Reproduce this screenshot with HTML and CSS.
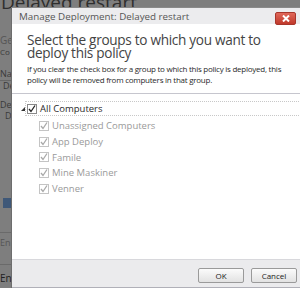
FILE: index.html
```html
<!DOCTYPE html>
<html lang="en">
<head>
  <meta charset="UTF-8">
  <title>Manage Deployment</title>
  <link rel="stylesheet" href="styles.css">
</head>
<body>
  <div class="backdrop">
    <div class="page-title">Delayed restart</div>
    <div class="frag ge">Ge</div>
    <div class="frag co">Co</div>
    <div class="frag na">Na</div>
    <div class="frag de1">De</div>
    <div class="frag des">Des</div>
    <div class="frag de2">De</div>
    <div class="frag blue"></div>
    <div class="frag en1">En</div>
    <div class="frag en2">En</div>
  </div>

  <div class="dialog">
    <div class="titlebar">
      <span class="title">Manage Deployment: Delayed restart</span>
      <span class="close">
        <svg width="8" height="7" viewBox="0 0 8 7"><path d="M1 0.5 L7 6.5 M7 0.5 L1 6.5" stroke="#fff" stroke-width="2"/></svg>
      </span>
    </div>
    <div class="intro">
      <h2>Select the groups to which you want to deploy this policy</h2>
      <p>If you clear the check box for a group to which this policy is deployed, this policy will be removed from computers in that group.</p>
    </div>
    <div class="tree">
      <div class="node root">
        <span class="arrow"></span>
        <span class="box"><svg width="8" height="8" viewBox="0 0 8 8"><path d="M1 4 L3 6.5 L7 0.5" fill="none" stroke="#222" stroke-width="1.3"/></svg></span>
        <span>All Computers</span>
      </div>
      <div class="children">
        <div class="node"><span class="box"><svg width="8" height="8" viewBox="0 0 8 8"><path d="M1 4 L3 6.5 L7 0.5" fill="none" stroke="#a8a8a8" stroke-width="1.3"/></svg></span>Unassigned Computers</div>
        <div class="node"><span class="box"><svg width="8" height="8" viewBox="0 0 8 8"><path d="M1 4 L3 6.5 L7 0.5" fill="none" stroke="#a8a8a8" stroke-width="1.3"/></svg></span>App Deploy</div>
        <div class="node"><span class="box"><svg width="8" height="8" viewBox="0 0 8 8"><path d="M1 4 L3 6.5 L7 0.5" fill="none" stroke="#a8a8a8" stroke-width="1.3"/></svg></span>Famile</div>
        <div class="node"><span class="box"><svg width="8" height="8" viewBox="0 0 8 8"><path d="M1 4 L3 6.5 L7 0.5" fill="none" stroke="#a8a8a8" stroke-width="1.3"/></svg></span>Mine Maskiner</div>
        <div class="node"><span class="box"><svg width="8" height="8" viewBox="0 0 8 8"><path d="M1 4 L3 6.5 L7 0.5" fill="none" stroke="#a8a8a8" stroke-width="1.3"/></svg></span>Venner</div>
      </div>
    </div>
    <div class="footer">
      <button>OK</button>
      <button>Cancel</button>
    </div>
  </div>
</body>
</html>
```

FILE: styles.css
```css
body {
  margin: 0;
  width: 300px;
  height: 288px;
  overflow: hidden;
  position: relative;
  background-color: #7e7e7e;
  font-family: 'Open Sans', 'Noto Sans', sans-serif;
}
.backdrop {
  color: #3a3a3a;
  font-size: 9px;
}
.page-title {
  font-size: 19px;
  line-height: 14px;
  margin-top: -5px;
  padding-left: 1px;
  color: #2e2e2e;
}
.frag {
  height: 10px;
  line-height: 10px;
}
.ge { margin-top: 26px; font-size: 10px; color: #555; }
.co { margin-top: 2px; font-size: 8px; }
.na { margin-top: 12px; }
.de1 { margin-top: 1px; padding-left: 3px; border-top: 1px solid #666; }
.des { margin-top: 9px; }
.de2 { margin-top: 1px; padding-left: 5px; }
.blue { margin: 77px 0 0 3px; width: 8px; height: 10px; background: #3f5878; }
.en1 { margin-top: 24px; border-top: 1px solid #6a6a6a; padding-top: 5px; color: #555; }
.en2 { margin-top: 16px; border-top: 1px solid #6a6a6a; padding-top: 8px; font-size: 10px; color: #222; }

.dialog {
  position: absolute;
  left: 11px;
  top: 7px;
  width: 300px;
  height: 281px;
  background-color: #fff;
  display: flex;
  flex-direction: column;
  border-left: 1px solid #6d6d6d;
  border-top: 1px solid #8a8a8a;
  box-sizing: border-box;
}
.titlebar {
  height: 16px;
  background-color: #ececee;
  display: flex;
  align-items: center;
  justify-content: space-between;
  padding-left: 7px;
  padding-right: 15px;
}
.title {
  font-size: 9.8px;
  color: #555;
}
.close {
  width: 19px;
  height: 11px;
  margin-top: 4px;
  background: linear-gradient(#e0685a, #c0392b);
  border: 1px solid #a8362c;
  border-radius: 2px;
  display: flex;
  align-items: center;
  justify-content: center;
}
.intro {
  padding: 9px 10px 0 15px;
  border-bottom: 1px solid #c6c6ce;
  height: 60px;
}
h2 {
  margin: 0;
  width: 250px;
  font-size: 13.6px;
  font-weight: normal;
  line-height: 13px;
  letter-spacing: -0.3px;
  color: #444;
}
p {
  margin: 4px 0 0;
  font-size: 8px;
  line-height: 11px;
  color: #2a2a2a;
  letter-spacing: -0.25px;
}
.tree {
  padding-top: 7px;
  font-size: 9.5px;
}
.node {
  display: flex;
  align-items: center;
  height: 15.7px;
  color: #9a9a9a;
}
.root {
  color: #2a2a2a;
  margin-left: 13px;
  height: 13px;
  border: 1px dotted #c8c8c8;
  border-right: none;
  padding-left: 1px;
}
.arrow {
  width: 0;
  height: 0;
  border-left: 4px solid transparent;
  border-bottom: 4px solid #333;
  margin-left: -6px;
  margin-right: 2px;
}
.box {
  width: 8px;
  height: 8px;
  border: 1px solid #8a8a8a;
  background: #fff;
  margin-right: 3px;
  display: flex;
}
.children {
  padding-left: 27px;
  padding-top: 2px;
}
.children .box {
  border-color: #c4c4c4;
}
.footer {
  margin-top: auto;
  height: 29px;
  background-color: #ebebed;
  border-top: 1px solid #d8d8dc;
  border-bottom: 1px solid #b0b0b8;
  display: flex;
  align-items: center;
  justify-content: flex-end;
  gap: 7px;
  padding-right: 14px;
  padding-top: 3px;
  box-sizing: border-box;
}
button {
  width: 46px;
  height: 15px;
  font-family: inherit;
  font-size: 8px;
  color: #222;
  background: linear-gradient(#fbfbfb, #e2e2e2);
  border: 1px solid #9a9a9a;
  border-radius: 2px;
  padding: 0;
}
```
